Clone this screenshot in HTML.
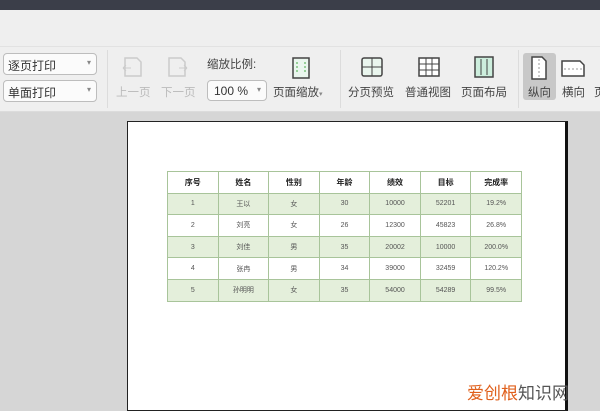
<!DOCTYPE html>
<html><head><meta charset="utf-8"><style>
*{margin:0;padding:0;box-sizing:border-box}
body{width:600px;height:405px;overflow:hidden;position:relative;background:#d6d6d6;font-family:"Liberation Sans","Noto Sans CJK SC",sans-serif;color:#333}
.a{position:absolute}
.top{left:0;top:0;width:600px;height:10px;background:#3b3e49}
.rib{left:0;top:10px;width:600px;height:102px;background:#efefef;border-bottom:1px solid #dcdcdc}
.line{left:0;top:46px;width:600px;height:1px;background:#e2e2e2}
.dd{background:#fbfbfb;border:1px solid #bdbdbd;border-radius:4px;font-size:12px;padding:3px 0 0 4px;color:#333}
.dd:after{content:"▾";position:absolute;right:5px;top:4px;font-size:8px;color:#888}
.sep{width:1px;background:#dcdcdc;top:50px;height:58px}
.lbl{font-size:11.5px;color:#444;white-space:nowrap}
.page{left:127px;top:121px;width:441px;height:290px;background:#fff;border:1px solid #222;border-right:3px solid #111}
table{position:absolute;left:167px;top:171px;width:355px;table-layout:fixed;border-collapse:collapse;font-size:7px;color:#555}
td{border:1px solid #a8c49a;height:21.6px;text-align:center}
tr.g td{background:#e4efdb}
tr.h td{font-weight:bold;font-size:8px;color:#222}
</style></head><body>
<div class="a top"></div>
<div class="a rib"></div>
<div class="a line"></div>
<div class="a dd" style="left:3px;top:53px;width:94px;height:22px">逐页打印</div>
<div class="a dd" style="left:3px;top:80px;width:94px;height:22px">单面打印</div>
<div class="a sep" style="left:107px"></div>
<svg class="a" style="left:122px;top:56px" width="22" height="22"><path d="M3 2h12l4 4v14H3z" fill="none" stroke="#ccc" stroke-width="1.5"/><path d="M1 12h8M1 12l3-3M1 12l3 3" stroke="#ccc" fill="none"/></svg>
<svg class="a" style="left:166px;top:56px" width="22" height="22"><path d="M3 2h12l4 4v14H3z" fill="none" stroke="#ccc" stroke-width="1.5"/><path d="M13 12h8M21 12l-3-3M21 12l-3 3" stroke="#ccc" fill="none"/></svg>
<div class="a lbl" style="left:116px;top:84px;color:#bbb">上一页</div>
<div class="a lbl" style="left:161px;top:84px;color:#bbb">下一页</div>
<div class="a lbl" style="left:207px;top:56px">缩放比例:</div>
<div class="a dd" style="left:207px;top:80px;width:60px;height:21px;padding-left:6px">100 %</div>
<svg class="a" style="left:291px;top:56px" width="20" height="24"><rect x="2" y="2" width="16" height="20" fill="#eaf6ee" stroke="#444" stroke-width="1.5"/><path d="M6 6v12M14 6v12" stroke="#4a4" stroke-dasharray="2 2"/></svg>
<div class="a lbl" style="left:273px;top:84px">页面缩放<span style="font-size:7px;color:#888">▾</span></div>
<div class="a sep" style="left:340px"></div>
<svg class="a" style="left:360px;top:56px" width="24" height="22"><rect x="2" y="2" width="20" height="18" rx="2" fill="#eaf6ee" stroke="#444" stroke-width="1.5"/><path d="M12 2v18M2 11h20" stroke="#444"/></svg>
<svg class="a" style="left:417px;top:56px" width="24" height="22"><rect x="2" y="2" width="20" height="18" fill="#fff" stroke="#444" stroke-width="1.5"/><path d="M2 8h20M2 14h20M9 2v18M15 2v18" stroke="#444"/></svg>
<svg class="a" style="left:473px;top:55px" width="22" height="24"><rect x="2" y="2" width="18" height="20" fill="#cdeedd" stroke="#444" stroke-width="1.5"/><path d="M8 4v16M14 4v16" stroke="#444"/></svg>
<div class="a lbl" style="left:348px;top:84px">分页预览</div>
<div class="a lbl" style="left:405px;top:84px">普通视图</div>
<div class="a lbl" style="left:461px;top:84px">页面布局</div>
<div class="a sep" style="left:518px"></div>
<div class="a" style="left:523px;top:53px;width:33px;height:47px;background:#c8c8c8;border-radius:3px"></div>
<svg class="a" style="left:529px;top:55px" width="20" height="26"><path d="M3 2h10l4 4v18H3z" fill="#fff" stroke="#444" stroke-width="1.5"/><path d="M10 4v18" stroke="#999" stroke-dasharray="2 2"/></svg>
<svg class="a" style="left:560px;top:58px" width="26" height="20"><path d="M2 3h18l4 4v11H2z" fill="#fff" stroke="#444" stroke-width="1.5"/><path d="M4 11h18" stroke="#999" stroke-dasharray="2 2"/></svg>
<div class="a lbl" style="left:528px;top:84px">纵向</div>
<div class="a lbl" style="left:562px;top:84px">横向</div>
<div class="a lbl" style="left:594px;top:84px">页</div>
<div class="a page"></div>
<table>
<tr class="h"><td>序号</td><td>姓名</td><td>性别</td><td>年龄</td><td>绩效</td><td>目标</td><td>完成率</td></tr>
<tr class="g"><td>1</td><td>王以</td><td>女</td><td>30</td><td>10000</td><td>52201</td><td>19.2%</td></tr>
<tr><td>2</td><td>刘亮</td><td>女</td><td>26</td><td>12300</td><td>45823</td><td>26.8%</td></tr>
<tr class="g"><td>3</td><td>刘佳</td><td>男</td><td>35</td><td>20002</td><td>10000</td><td>200.0%</td></tr>
<tr><td>4</td><td>张冉</td><td>男</td><td>34</td><td>39000</td><td>32459</td><td>120.2%</td></tr>
<tr class="g"><td>5</td><td>孙明明</td><td>女</td><td>35</td><td>54000</td><td>54289</td><td>99.5%</td></tr>
</table>
<div class="a" style="left:467px;top:379px;font-size:17px;white-space:nowrap"><span style="color:#e0601c">爱创根</span><span style="color:#555">知识网</span></div>
</body></html>
